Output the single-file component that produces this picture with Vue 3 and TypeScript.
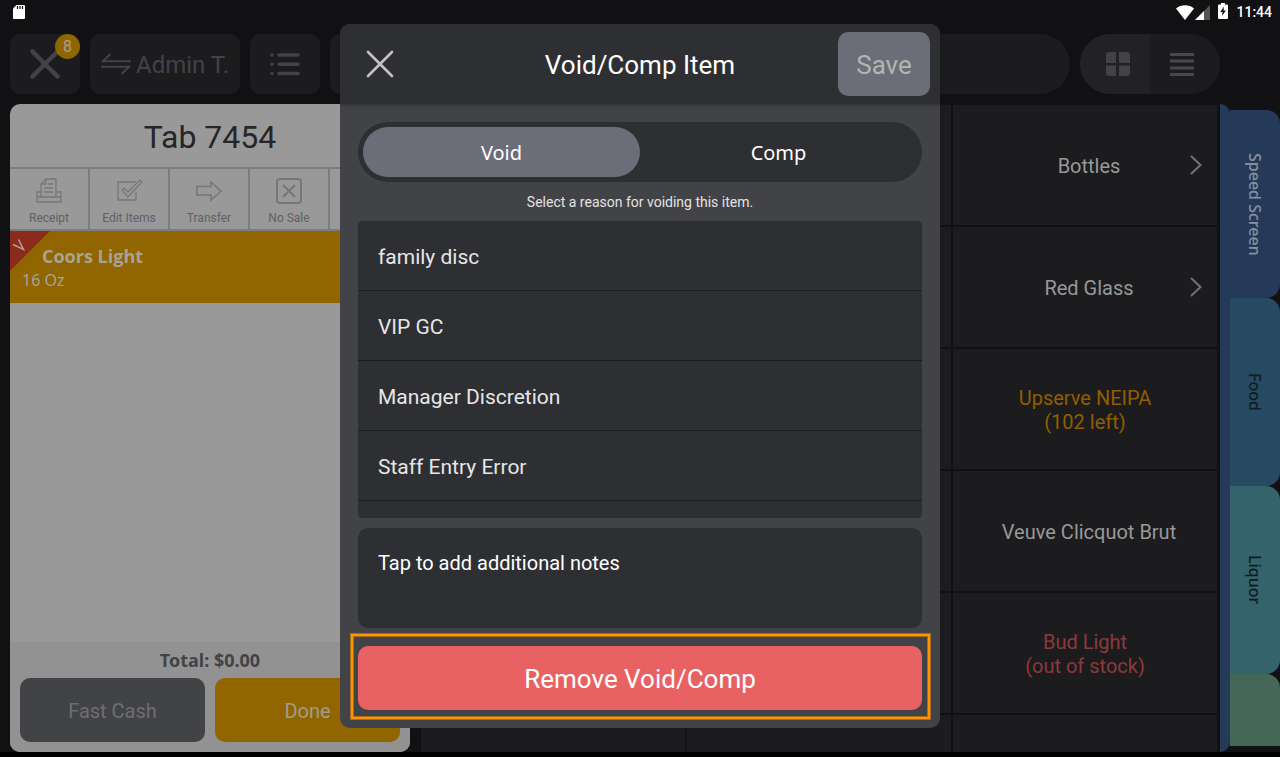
<script setup lang="ts">
import { ref } from 'vue'

interface Product {
  name: string
  note?: string
  tone?: 'low' | 'out'
  group?: boolean
}

const mode = ref<'Void' | 'Comp'>('Void')
const notes = ref('')
const reasons = ['family disc', 'VIP GC', 'Manager Discretion', 'Staff Entry Error', '']

const blank: Product = { name: '' }
const products: Product[] = [
  blank, blank, { name: 'Bottles', group: true },
  blank, blank, { name: 'Red Glass', group: true },
  blank, blank, { name: 'Upserve NEIPA', note: '(102 left)', tone: 'low' },
  blank, blank, { name: 'Veuve Clicquot Brut' },
  blank, blank, { name: 'Bud Light', note: '(out of stock)', tone: 'out' },
  blank, blank, blank,
]

const categories = [
  { name: 'Speed Screen', cls: 'speed' },
  { name: 'Food', cls: 'food' },
  { name: 'Liquor', cls: 'liquor' },
  { name: '', cls: 'green' },
]
</script>

<template>
  <div class="app">
    <header class="status">
      <svg width="14" height="16" viewBox="0 0 14 16"><path d="M4.500 1H12a1 1 0 0 1 1 1v12a1 1 0 0 1-1 1H2a1 1 0 0 1-1-1V4.500z" fill="#fff" /><path d="M5.500 2v3M8 2v3M10.500 2v3" stroke="#111113" stroke-width="1.200" /></svg>
      <span class="grow"></span>
      <svg class="wifi" width="18" height="15" viewBox="0 0 18 15"><path d="M0 3.500C5-.8 13-.8 18 3.500L9 15z" fill="#fff" /></svg>
      <svg class="signal" width="15" height="15" viewBox="0 0 15 15"><path d="M15 0v15H0z" fill="#555" /><path d="M9 6v9H0z" fill="#fff" /></svg>
      <svg class="battery" width="10" height="16" viewBox="0 0 10 16"><path d="M3 0h4v1.500h2a1 1 0 0 1 1 1V15a1 1 0 0 1-1 1H1a1 1 0 0 1-1-1V2.500a1 1 0 0 1 1-1h2z" fill="#fff" /><path d="M6 3.500L2.200 9h2.300L4 13l3.800-5.500H5.500z" fill="#111113" /></svg>
      <time>11:44</time>
    </header>

    <nav class="toolbar">
      <button class="tool square" aria-label="Close tab">
        <svg width="30" height="30" viewBox="0 0 30 30"><path d="M2.500 2.500l25 25M27.500 2.500l-25 25" stroke="#424247" stroke-width="4.500" stroke-linecap="round" /></svg>
        <span class="badge">8</span>
      </button>
      <button class="tool user">
        <svg width="30" height="22" viewBox="0 0 30 22" fill="none" stroke="#424247" stroke-width="2"><path d="M30 8.200H2L9.500 1M0 13.800h28L20.500 21" /></svg>
        <span>Admin T.</span>
      </button>
      <button class="tool square" aria-label="Open tabs">
        <svg width="30" height="24" viewBox="0 0 30 24" stroke="#424247" stroke-width="3.600" stroke-linecap="round"><path d="M9 3h19M9 12.200h19M9 21.500h19M2 3h.01M2 12.200h.01M2 21.500h.01" /></svg>
      </button>
      <button class="tool square" aria-label="More"></button>
      <input class="search" type="search" aria-label="Search" />
      <div class="views">
        <button class="on" aria-label="Grid view">
          <svg width="26" height="26" viewBox="0 0 26 26" fill="#424247"><path d="M4 1h7v11H1V4a3 3 0 0 1 3-3zM14 1h8a3 3 0 0 1 3 3v8H14zM1 14.500h10V25H4a3 3 0 0 1-3-3zM14 14.500h11V22a3 3 0 0 1-3 3h-8z" /></svg>
        </button>
        <button aria-label="List view">
          <svg width="26" height="26" viewBox="0 0 26 26" stroke="#48484a" stroke-width="2.800"><path d="M1 3.500h24M1 10h24M1 17h24M1 23.500h24" /></svg>
        </button>
      </div>
    </nav>

    <div class="work">
      <section class="ticket">
        <h1>Tab 7454</h1>
        <div class="actions">
          <button>
            <svg width="28" height="26" viewBox="0 0 28 26" fill="none" stroke="#77777a" stroke-width="1.300"><path d="M6 14H2v10h24V14h-4M2 19h24M6 19V6l5-5h10v18M11 1v5H6M13 6h5M9 10h9M9 14h9" /></svg>
            <span>Receipt</span>
          </button>
          <button>
            <svg width="28" height="26" viewBox="0 0 28 26" fill="none" stroke="#77777a" stroke-width="1.300"><path d="M21 4H3v18h18v-8" /><path d="M7 12l2-2 4 4L25 2l2 2-14 15z" /></svg>
            <span>Edit Items</span>
          </button>
          <button>
            <svg width="28" height="26" viewBox="0 0 28 26" fill="none" stroke="#77777a" stroke-width="1.600"><path d="M2 8.500h14V4l10 9-10 9v-5H2z" /></svg>
            <span>Transfer</span>
          </button>
          <button>
            <svg width="28" height="26" viewBox="0 0 28 26" fill="none" stroke="#77777a"><rect x="2" y="1" width="24" height="24" rx="3" stroke-width="2" /><path d="M8 7l12 12M20 7L8 19" stroke-width="2.200" /></svg>
            <span>No Sale</span>
          </button>
          <button aria-label="More actions"></button>
        </div>
        <div class="line">
          <svg class="flag" width="40" height="40" viewBox="0 0 40 40"><path d="M0 0h40L0 40z" fill="#8a2b1b" /><path d="M3 13.500l10.500 5L8.500 8.500" fill="none" stroke="#b5a09c" stroke-width="1.500" /></svg>
          <strong>Coors Light</strong>
          <span>16 Oz</span>
        </div>
        <footer>
          <p>Total: $0.00</p>
          <div class="pay">
            <button class="fast">Fast Cash</button>
            <button class="done">Done</button>
          </div>
        </footer>
      </section>

      <section class="menu">
        <button v-for="(p, i) in products" :key="i" class="cell" :class="[p.tone, { single: !p.note }]">
          <span>{{ p.name }}</span>
          <span v-if="p.note">{{ p.note }}</span>
          <svg v-if="p.group" class="chevron" width="12" height="20" viewBox="0 0 12 20"><path d="M1 1l9.500 9L1 19" fill="none" stroke="#737375" stroke-width="2" /></svg>
        </button>
      </section>

      <aside class="side">
        <div class="strip"></div>
        <div class="tabs">
          <button v-for="c in categories" :key="c.cls" :class="c.cls">{{ c.name }}</button>
        </div>
      </aside>
    </div>

    <div class="overlay">
      <div class="modal" role="dialog" aria-labelledby="modal-title">
        <header class="head">
          <button class="close" aria-label="Close">
            <svg width="28" height="28" viewBox="0 0 28 28"><path d="M2 2l24 24M26 2L2 26" stroke="#c3c3c4" stroke-width="2.600" stroke-linecap="round" /></svg>
          </button>
          <h2 id="modal-title">Void/Comp Item</h2>
          <button class="save">Save</button>
        </header>
        <div class="body">
          <div class="segment">
            <button :class="{ on: mode === 'Void' }" @click="mode = 'Void'">Void</button>
            <button :class="{ on: mode === 'Comp' }" @click="mode = 'Comp'">Comp</button>
          </div>
          <p class="hint">Select a reason for voiding this item.</p>
          <ul class="reasons">
            <li v-for="r in reasons" :key="r"><button>{{ r }}</button></li>
          </ul>
          <textarea v-model="notes" class="notes" aria-label="Additional notes" placeholder="Tap to add additional notes"></textarea>
          <div class="removal">
            <button class="remove">Remove Void/Comp</button>
            <div class="focus"></div>
          </div>
        </div>
      </div>
    </div>
  </div>
</template>

<style>
body {
  margin: 0;
  background: #000;
}
</style>

<style scoped>
.app,
.app * {
  box-sizing: border-box;
}
.app {
  display: flex;
  flex-direction: column;
  height: 100vh;
  border-bottom: 5px solid #000;
  background: #111113;
  font-family: Roboto, "Liberation Sans", sans-serif;
  overflow: hidden;
}
button,
input,
textarea {
  border: 0;
  padding: 0;
  margin: 0;
  background: none;
  color: inherit;
  font: inherit;
}
svg {
  display: block;
  flex: none;
}
h1,
h2,
p,
ul {
  margin: 0;
  padding: 0;
  font-weight: 400;
}

.status {
  flex: none;
  display: flex;
  align-items: center;
  height: 24px;
  padding: 0 8px 0 12px;
}
.grow {
  flex: 1;
}
.signal {
  margin-left: 1px;
}
.battery {
  margin: 0 8px 2px;
}
.status time {
  color: #fff;
  font-size: 14px;
  font-weight: 500;
}

.toolbar {
  flex: none;
  display: flex;
  gap: 10px;
  padding: 10px 60px 10px 10px;
}
.tool {
  position: relative;
  display: flex;
  align-items: center;
  justify-content: center;
  height: 60px;
  border-radius: 10px;
  background: #1c1c1e;
  color: #424247;
}
.square {
  width: 70px;
}
.user {
  width: 150px;
  gap: 5px;
  font-size: 24px;
}
.user span {
  padding-top: 2px;
}
.badge {
  position: absolute;
  top: 0;
  right: 0;
  width: 25px;
  height: 25px;
  border-radius: 50%;
  background: #916600;
  color: #a8a090;
  font-size: 16px;
  line-height: 25px;
}
.search {
  flex: 1;
  height: 60px;
  border-radius: 30px;
  background: #1c1c1e;
}
.views {
  display: flex;
  width: 140px;
  border-radius: 30px;
  overflow: hidden;
  background: #1c1c1e;
}
.views button {
  flex: 1;
  display: flex;
  align-items: center;
  justify-content: center;
}
.views button:last-child {
  padding-right: 6px;
}
.views .on {
  padding-left: 6px;
  background: #222224;
}

.work {
  flex: 1;
  min-height: 0;
  display: flex;
}
.ticket {
  flex: none;
  display: flex;
  flex-direction: column;
  width: 400px;
  margin-left: 10px;
  border-radius: 10px;
  background: #999;
  overflow: hidden;
}
.ticket h1 {
  height: 63px;
  color: #262626;
  font-size: 32px;
  line-height: 66px;
  text-align: center;
}
.actions {
  display: grid;
  grid-template-columns: repeat(5, 1fr);
  height: 64px;
  border: solid #7c7c84;
  border-width: 2px 0;
}
.actions button {
  display: flex;
  flex-direction: column;
  align-items: center;
  gap: 7px;
  padding-top: 9px;
  border-right: 2px solid #7c7c84;
  color: #606168;
  font-size: 12px;
  line-height: 14px;
}
.actions button:last-child {
  border-right: 0;
}
.line {
  position: relative;
  display: flex;
  flex-direction: column;
  height: 72px;
  padding: 13px 12px;
  background: #916600;
  color: #a8a398;
  font-family: "Noto Sans", sans-serif;
  font-size: 16px;
  line-height: 24px;
}
.line strong {
  padding-left: 20px;
  font-family: "Open Sans", sans-serif;
  font-size: 18px;
}
.flag {
  position: absolute;
  top: 0;
  left: 0;
}
.ticket footer {
  margin-top: auto;
  padding: 0 10px 10px;
  background: #929292;
}
.ticket p {
  height: 36px;
  color: #424347;
  font-family: "Noto Sans", sans-serif;
  font-size: 18px;
  font-weight: 700;
  line-height: 36px;
  text-align: center;
}
.pay {
  display: flex;
  gap: 10px;
  font-size: 20px;
}
.pay button {
  flex: 1;
  height: 64px;
  padding-top: 2px;
  border-radius: 10px;
}
.fast {
  background: #424347;
  color: #6f6f70;
}
.done {
  background: #916600;
  color: #a39c8c;
}

.menu {
  flex: 1;
  display: grid;
  grid-template-columns: repeat(3, 1fr);
  grid-template-rows: repeat(5, 120px) 1fr;
  gap: 2px;
  margin: 1px 3px 0 11px;
}
.cell {
  position: relative;
  display: flex;
  flex-direction: column;
  align-items: center;
  justify-content: center;
  min-height: 0;
  padding-top: 2px;
  background: #1c1c1e;
  color: #98989a;
  font-size: 20px;
  line-height: 24px;
}
.single {
  padding-left: 8px;
}
.low {
  color: #915d00;
}
.out {
  color: #8b3a3b;
}
.chevron {
  position: absolute;
  top: 50px;
  right: 15px;
}

.side {
  flex: none;
  display: flex;
  width: 60px;
}
.strip {
  width: 10px;
  border-radius: 0 10px 10px 0;
  background: #243a58;
}
.tabs {
  flex: 1;
  display: flex;
  flex-direction: column;
  margin: 6px 0;
  overflow: hidden;
}
.tabs button {
  flex: none;
  height: 188px;
  border-radius: 0 14px 14px 0;
  color: #0e1b22;
  font-family: "Noto Sans", sans-serif;
  font-size: 16px;
  font-weight: 500;
  text-align: center;
  writing-mode: vertical-rl;
}
.tabs .speed {
  background: #243a58;
  color: #8590a0;
}
.tabs .food {
  background: #264a61;
}
.tabs .liquor {
  background: #34636b;
}
.tabs .green {
  background: #456758;
}

.overlay {
  position: fixed;
  inset: 0 0 5px;
  display: flex;
  align-items: center;
  justify-content: center;
}
.modal {
  width: 600px;
  border-radius: 10px;
  background: #424346;
  overflow: hidden;
}
.head {
  display: grid;
  grid-template-columns: 92px 1fr 92px;
  align-items: center;
  height: 80px;
  padding: 0 10px;
  background: #2e2f33;
  box-shadow: 0 1px 3px #2e2f33;
}
.close {
  justify-self: start;
  padding: 16px;
}
.head h2 {
  padding-top: 2px;
  color: #fff;
  font-size: 26px;
  line-height: 32px;
  text-align: center;
}
.save {
  height: 64px;
  padding-top: 2px;
  border-radius: 10px;
  background: #6b6d78;
  color: #b4b4b5;
  font-size: 26px;
}
.body {
  display: flex;
  flex-direction: column;
  padding: 18px;
}
.segment {
  display: flex;
  height: 60px;
  padding: 5px;
  border-radius: 30px;
  background: #2e2f33;
}
.segment button {
  flex: 1;
  border-radius: 25px;
  color: #fff;
  font-family: "Noto Sans", sans-serif;
  font-size: 20px;
}
.segment .on {
  background: #6b6d78;
}
.hint {
  height: 39px;
  color: #e3e3e3;
  font-size: 14px;
  line-height: 41px;
  text-align: center;
}
.reasons {
  height: 297px;
  border-radius: 4px;
  background: #2e2f33;
  overflow: hidden;
  list-style: none;
}
.reasons button {
  display: block;
  width: 100%;
  height: 70px;
  padding: 2px 20px 0;
  border-bottom: 1px solid #1b1c1f;
  color: #e6e6e6;
  font-size: 21px;
  text-align: left;
}
.notes {
  height: 100px;
  margin-top: 10px;
  padding: 23px 20px;
  border-radius: 10px;
  background: #2e2f33;
  color: #fff;
  font-size: 20px;
  line-height: 24px;
  resize: none;
}
.notes::placeholder {
  color: #fff;
  opacity: 1;
}
.removal {
  position: relative;
  margin-top: 18px;
}
.remove {
  display: block;
  width: 100%;
  height: 64px;
  padding-top: 2px;
  border-radius: 10px;
  background: #e96263;
  color: #fff;
  font-size: 26px;
}
.focus {
  position: absolute;
  inset: -12px -8px -9px -7px;
  border: 2px solid #ff9400;
  box-shadow: 0 0 0 1px #a86c1e, inset 0 0 0 1px #a86c1e;
  pointer-events: none;
}
</style>
